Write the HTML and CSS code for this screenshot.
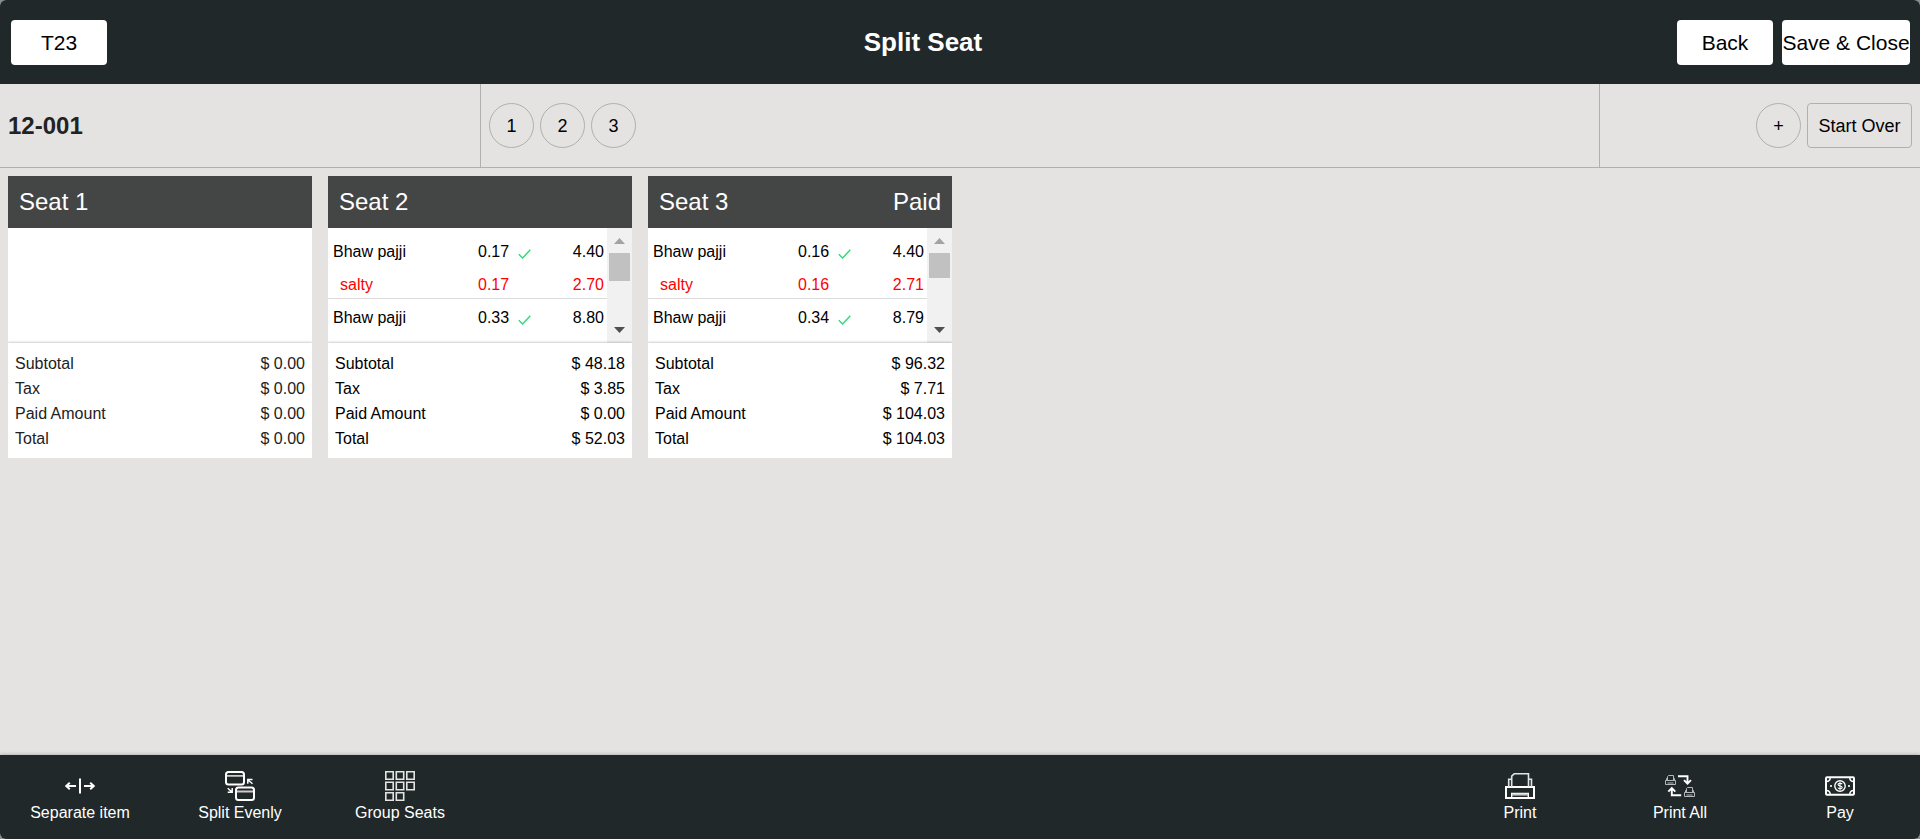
FILE: index.html
```html
<!DOCTYPE html>
<html lang="en">
<head>
<meta charset="utf-8">
<title>Split Seat</title>
<link rel="stylesheet" href="styles.css">
</head>
<body>
<svg class="defs" aria-hidden="true">
  <symbol id="check" viewBox="0 0 13 10"><path d="M.8 5.2 4.6 9 12.3.8" fill="none" stroke="#2edc78" stroke-width="1.4"/></symbol>
  <symbol id="up" viewBox="0 0 11 6"><path d="M5.5 0 11 6H0z" fill="#a3a3a3"/></symbol>
  <symbol id="down" viewBox="0 0 11 6"><path d="M0 0h11L5.5 6z" fill="#505050"/></symbol>
</svg>
<div class="app">
  <header class="topbar">
    <div class="topbar-side"><button class="btn" type="button">T23</button></div>
    <h1 class="topbar-title">Split Seat</h1>
    <div class="topbar-actions">
      <button class="btn" type="button">Back</button>
      <button class="btn btn-wide" type="button">Save &amp; Close</button>
    </div>
  </header>

  <section class="subbar">
    <h2 class="order">12-001</h2>
    <nav class="seats">
      <button class="round" type="button">1</button>
      <button class="round" type="button">2</button>
      <button class="round" type="button">3</button>
    </nav>
    <div class="tools">
      <button class="round" type="button" aria-label="Add seat">+</button>
      <button class="start" type="button">Start Over</button>
    </div>
  </section>

  <main class="cards">
    <article class="card">
      <header class="card-head"><h3>Seat 1</h3></header>
      <div class="card-body"></div>
      <dl class="totals soft">
        <div><dt>Subtotal</dt><dd>$ 0.00</dd></div>
        <div><dt>Tax</dt><dd>$ 0.00</dd></div>
        <div><dt>Paid Amount</dt><dd>$ 0.00</dd></div>
        <div><dt>Total</dt><dd>$ 0.00</dd></div>
      </dl>
    </article>

    <article class="card">
      <header class="card-head"><h3>Seat 2</h3></header>
      <div class="card-body">
        <table class="items">
          <tr><td class="name">Bhaw pajji</td><td class="qty">0.17<svg class="check"><use href="#check"/></svg></td><td class="price">4.40</td></tr>
          <tr class="extra"><td class="name">salty</td><td class="qty">0.17</td><td class="price">2.70</td></tr>
          <tr><td class="name">Bhaw pajji</td><td class="qty">0.33<svg class="check"><use href="#check"/></svg></td><td class="price">8.80</td></tr>
        </table>
        <div class="scroll"><svg class="arrow"><use href="#up"/></svg><div class="track"><div class="thumb" style="height:28px"></div></div><svg class="arrow"><use href="#down"/></svg></div>
      </div>
      <dl class="totals">
        <div><dt>Subtotal</dt><dd>$ 48.18</dd></div>
        <div><dt>Tax</dt><dd>$ 3.85</dd></div>
        <div><dt>Paid Amount</dt><dd>$ 0.00</dd></div>
        <div><dt>Total</dt><dd>$ 52.03</dd></div>
      </dl>
    </article>

    <article class="card">
      <header class="card-head"><h3>Seat 3</h3><span>Paid</span></header>
      <div class="card-body">
        <table class="items">
          <tr><td class="name">Bhaw pajji</td><td class="qty">0.16<svg class="check"><use href="#check"/></svg></td><td class="price">4.40</td></tr>
          <tr class="extra"><td class="name">salty</td><td class="qty">0.16</td><td class="price">2.71</td></tr>
          <tr><td class="name">Bhaw pajji</td><td class="qty">0.34<svg class="check"><use href="#check"/></svg></td><td class="price">8.79</td></tr>
        </table>
        <div class="scroll"><svg class="arrow"><use href="#up"/></svg><div class="track"><div class="thumb" style="height:25px"></div></div><svg class="arrow"><use href="#down"/></svg></div>
      </div>
      <dl class="totals">
        <div><dt>Subtotal</dt><dd>$ 96.32</dd></div>
        <div><dt>Tax</dt><dd>$ 7.71</dd></div>
        <div><dt>Paid Amount</dt><dd>$ 104.03</dd></div>
        <div><dt>Total</dt><dd>$ 104.03</dd></div>
      </dl>
    </article>
  </main>

  <footer class="bottombar">
    <div class="group">
      <button class="action" type="button">
        <svg class="icon" viewBox="0 0 30 30"><g fill="none" stroke="#fff" stroke-width="2"><path d="M15 7.500v15M11 15H2M19 15h9"/><path d="M4.800 11.800 1.300 15l3.500 3.200M25.200 11.800l3.500 3.200-3.500 3.200"/></g></svg>
        Separate item
      </button>
      <button class="action" type="button">
        <svg class="icon" viewBox="0 0 30 30"><g fill="none" stroke="#fff"><path d="M1 4.800h18M11 20.500h18" stroke="#ccc" stroke-width="1.800"/><rect x="1" y="1" width="18" height="12.500" rx="2.500" stroke-width="2"/><rect x="11" y="16.500" width="18" height="12.500" rx="2.500" stroke-width="2"/><path d="M27.500 12.800 23 9M22.800 12.800V8.600H27.500M2.700 17.300l4.300 3.700M7.200 17v4.300H2.700" stroke-width="1.500"/></g></svg>
        Split Evenly
      </button>
      <button class="action" type="button">
        <svg class="icon" viewBox="0 0 30 30"><g fill="none" stroke="#e4e4e4" stroke-width="1.600"><path d="M.8.800h7.400v7.400H.8zM11.300.800h7.400v7.400h-7.400zM21.800.800h7.400v7.400h-7.400zM.8 11.300h7.400v7.400H.8zM11.300 11.300h7.400v7.400h-7.400zM21.800 11.300h7.400v7.400h-7.400zM.8 21.800h7.400v7.400H.8zM11.300 21.800h7.400v7.400h-7.400z"/></g></svg>
        Group Seats
      </button>
    </div>
    <div class="group">
      <button class="action" type="button">
        <svg class="icon" viewBox="0 0 30 30"><g fill="none" stroke="#fff"><path d="M1 16h28v11H1z" stroke-width="2"/><path d="M6.700 16V5.200L9.300 2.700h14.200V16M6.700 8.300H3.700V16M23.700 8.300h2.800V16" stroke="#e4e4e4" stroke-width="1.600"/><path d="M6.700 27v-4.500h16.600V27" stroke-width="1.400"/><path d="M7 23.600h16" stroke="#ccc" stroke-width="2"/></g></svg>
        Print
      </button>
      <button class="action" type="button">
        <svg class="icon" viewBox="0 0 30 30"><g fill="none" stroke="#b4b8b8" stroke-width="1"><path d="M.5 9.500h10v4H.5zM2.500 9.500v-4l1-1h5v5M1.500 9.500v-2h1M8.500 7.500h1v2M2.500 12h6"/><path d="M19.500 21.500h10v4h-10zM21.500 21.500v-4l1-1h5v5M20.500 21.500v-2h1M27.500 19.500h1v2M21.500 24h6"/></g><g fill="none" stroke="#fff" stroke-width="1.900"><path d="M13 5.300h9.500v7M19 9.200l3.500 3.500L26 9.200M16.200 24.300H6.800v-7M3.300 20.600l3.500-3.500 3.500 3.500"/></g></svg>
        Print All
      </button>
      <button class="action" type="button">
        <svg class="icon" viewBox="0 0 30 30"><g fill="none" stroke="#fff" stroke-width="1.500"><rect x="1" y="6.200" width="28" height="17.600" rx="1" stroke-width="2"/><path d="M1.500 10.500Q5 10.500 5.300 6.500M1.500 19.500Q5 19.500 5.300 23.500M28.500 10.500Q25 10.500 24.700 6.500M28.500 19.500Q25 19.500 24.700 23.500"/><circle cx="15" cy="15" r="5.200" stroke-width="1.400"/><path d="M17.200 13.300c-.5-1.300-4.200-1.400-4.200.2 0 1.900 4.200 1 4.200 3 0 1.600-3.800 1.600-4.400.1M15 11v8" stroke-width="1.100"/></g><circle cx="6" cy="15" r="1.100" fill="#fff"/><circle cx="24" cy="15" r="1.100" fill="#fff"/></svg>
        Pay
      </button>
    </div>
  </footer>
</div>
</body>
</html>
```
FILE: styles.css
```css
* { box-sizing: border-box; }

body {
  margin: 0;
  background: #8c8c8c;
  color: #000;
  font-family: "Liberation Sans", Arial, sans-serif;
  font-size: 16px;
  line-height: 20px;
}

h1, h2, h3, dl, dd { margin: 0; }

button {
  font-family: inherit;
  color: #000;
  cursor: pointer;
}

.defs { position: absolute; width: 0; height: 0; }

.app {
  display: flex;
  flex-direction: column;
  min-height: 100vh;
  background: #e5e3e1;
  border-radius: 6px;
  overflow: hidden;
}

.topbar {
  display: flex;
  align-items: center;
  min-height: 84px;
  padding: 0 10px 0 11px;
  background: #20282a;
}

.topbar-side { width: 158px; }

.topbar-title {
  flex: 1;
  text-align: center;
  color: #fff;
  font-size: 26px;
  line-height: 32px;
}

.topbar-actions { display: flex; gap: 9px; }

.btn {
  min-width: 96px;
  height: 45px;
  padding: 1px 0 0;
  border: 0;
  border-radius: 4px;
  background: #fff;
  font-size: 21px;
}

.btn-wide { min-width: 128px; }

.subbar {
  display: grid;
  grid-template-columns: 3fr 7fr 2fr;
  min-height: 84px;
  border-bottom: 1px solid #b0b0b0;
}

.order {
  align-self: center;
  padding-left: 8px;
  color: #222;
  font-size: 24px;
  line-height: 28px;
}

.seats, .tools {
  display: flex;
  align-items: center;
  gap: 6px;
  padding: 0 8px;
}

.seats {
  border-left: 1px solid #b0b0b0;
  border-right: 1px solid #b0b0b0;
}

.tools { justify-content: flex-end; }

.round, .start {
  height: 45px;
  padding: 2px 0 0;
  border: 1px solid #b0b0b0;
  background: transparent;
  font-size: 18px;
}

.round { width: 45px; border-radius: 50%; }

.start { min-width: 105px; border-radius: 4px; }

.cards {
  flex: 1;
  display: flex;
  flex-wrap: wrap;
  align-content: flex-start;
  align-items: flex-start;
  gap: 16px;
  padding: 8px;
}

.card { width: 304px; background: #fff; }

.card-head {
  display: flex;
  justify-content: space-between;
  align-items: center;
  height: 52px;
  padding: 0 11px;
  background: #444645;
  color: #fff;
  font-size: 24px;
}

.card-head h3 { font-size: 24px; font-weight: 400; }

.card-body {
  display: flex;
  align-items: flex-start;
  height: 115px;
  overflow: hidden;
}

.items {
  flex: 1;
  margin-top: 5px;
  table-layout: fixed;
  border-spacing: 0;
}

.items td { padding: 9px 3px 4px 5px; white-space: nowrap; }
.items .name { width: 145px; }
.items .price { text-align: right; }
.items .extra { color: #f00; }
.items .extra td { padding-bottom: 3px; border-bottom: 1px solid #dcdcdc; }
.items .extra .name { padding-left: 12px; }

.check {
  width: 13px;
  height: 10px;
  margin-left: 9px;
  vertical-align: -2px;
}

.scroll {
  display: flex;
  flex-direction: column;
  align-items: center;
  align-self: stretch;
  width: 25px;
  padding: 10px 2px;
  background: #f1f1f1;
}

.arrow { width: 11px; height: 6px; }

.track { flex: 1; align-self: stretch; padding-top: 9px; }

.thumb { background: #c1c1c1; }

.totals {
  position: relative;
  padding: 8px 7px 7px;
  background: #fff;
  box-shadow: 0 -1px 2px rgba(0, 0, 0, .2);
  clip-path: inset(-3px 0 0);
  line-height: 25px;
}

.totals div { display: flex; justify-content: space-between; }

.soft { color: #222; }

.bottombar {
  display: flex;
  justify-content: space-between;
  min-height: 84px;
  background: #20282a;
  box-shadow: 0 0 4px rgba(0, 0, 0, .3);
}

.group { display: flex; }

.action {
  display: flex;
  flex-direction: column;
  align-items: center;
  gap: 2px;
  width: 160px;
  padding: 16px 0;
  border: 0;
  background: none;
  color: #fff;
  font-size: 16px;
  line-height: 20px;
}

.icon { width: 30px; height: 30px; }
```
